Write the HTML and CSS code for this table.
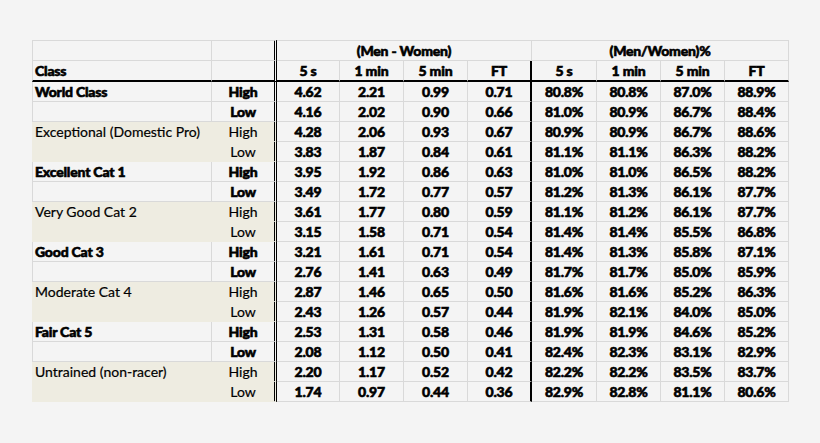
FILE: index.html
```html
<!DOCTYPE html>
<html>
<head>
<meta charset="utf-8">
<link rel="stylesheet" href="styles.css">
</head>
<body>
<table class="grid">
<colgroup>
<col class="c-class"><col class="c-hl"><col class="c-a"><col class="c-b"><col class="c-b"><col class="c-b"><col class="c-d"><col class="c-b"><col class="c-b"><col class="c-b">
</colgroup>
<thead>
<tr class="top">
<th class="cls"></th><th class="hl"></th><th colspan="4" class="grp1">(Men - Women)</th><th colspan="4">(Men/Women)%</th>
</tr>
<tr class="sub">
<th class="cls">Class</th><th class="hl"></th><th>5 s</th><th>1 min</th><th>5 min</th><th class="sep">FT</th><th>5 s</th><th>1 min</th><th>5 min</th><th>FT</th>
</tr>
</thead>
<tbody>
<tr><td class="cls">World Class</td><td class="hl">High</td><td>4.62</td><td>2.21</td><td>0.99</td><td class="sep">0.71</td><td>80.8%</td><td>80.8%</td><td>87.0%</td><td>88.9%</td></tr>
<tr><td class="cls"></td><td class="hl">Low</td><td>4.16</td><td>2.02</td><td>0.90</td><td class="sep">0.66</td><td>81.0%</td><td>80.9%</td><td>86.7%</td><td>88.4%</td></tr>
<tr class="shade first"><td class="cls">Exceptional (Domestic Pro)</td><td class="hl">High</td><td>4.28</td><td>2.06</td><td>0.93</td><td class="sep">0.67</td><td>80.9%</td><td>80.9%</td><td>86.7%</td><td>88.6%</td></tr>
<tr class="shade"><td class="cls"></td><td class="hl">Low</td><td>3.83</td><td>1.87</td><td>0.84</td><td class="sep">0.61</td><td>81.1%</td><td>81.1%</td><td>86.3%</td><td>88.2%</td></tr>
<tr><td class="cls">Excellent Cat 1</td><td class="hl">High</td><td>3.95</td><td>1.92</td><td>0.86</td><td class="sep">0.63</td><td>81.0%</td><td>81.0%</td><td>86.5%</td><td>88.2%</td></tr>
<tr><td class="cls"></td><td class="hl">Low</td><td>3.49</td><td>1.72</td><td>0.77</td><td class="sep">0.57</td><td>81.2%</td><td>81.3%</td><td>86.1%</td><td>87.7%</td></tr>
<tr class="shade first"><td class="cls">Very Good Cat 2</td><td class="hl">High</td><td>3.61</td><td>1.77</td><td>0.80</td><td class="sep">0.59</td><td>81.1%</td><td>81.2%</td><td>86.1%</td><td>87.7%</td></tr>
<tr class="shade"><td class="cls"></td><td class="hl">Low</td><td>3.15</td><td>1.58</td><td>0.71</td><td class="sep">0.54</td><td>81.4%</td><td>81.4%</td><td>85.5%</td><td>86.8%</td></tr>
<tr><td class="cls">Good Cat 3</td><td class="hl">High</td><td>3.21</td><td>1.61</td><td>0.71</td><td class="sep">0.54</td><td>81.4%</td><td>81.3%</td><td>85.8%</td><td>87.1%</td></tr>
<tr><td class="cls"></td><td class="hl">Low</td><td>2.76</td><td>1.41</td><td>0.63</td><td class="sep">0.49</td><td>81.7%</td><td>81.7%</td><td>85.0%</td><td>85.9%</td></tr>
<tr class="shade first"><td class="cls">Moderate Cat 4</td><td class="hl">High</td><td>2.87</td><td>1.46</td><td>0.65</td><td class="sep">0.50</td><td>81.6%</td><td>81.6%</td><td>85.2%</td><td>86.3%</td></tr>
<tr class="shade"><td class="cls"></td><td class="hl">Low</td><td>2.43</td><td>1.26</td><td>0.57</td><td class="sep">0.44</td><td>81.9%</td><td>82.1%</td><td>84.0%</td><td>85.0%</td></tr>
<tr><td class="cls">Fair Cat 5</td><td class="hl">High</td><td>2.53</td><td>1.31</td><td>0.58</td><td class="sep">0.46</td><td>81.9%</td><td>81.9%</td><td>84.6%</td><td>85.2%</td></tr>
<tr><td class="cls"></td><td class="hl">Low</td><td>2.08</td><td>1.12</td><td>0.50</td><td class="sep">0.41</td><td>82.4%</td><td>82.3%</td><td>83.1%</td><td>82.9%</td></tr>
<tr class="shade first"><td class="cls">Untrained (non-racer)</td><td class="hl">High</td><td>2.20</td><td>1.17</td><td>0.52</td><td class="sep">0.42</td><td>82.2%</td><td>82.2%</td><td>83.5%</td><td>83.7%</td></tr>
<tr class="shade"><td class="cls"></td><td class="hl">Low</td><td>1.74</td><td>0.97</td><td>0.44</td><td class="sep">0.36</td><td>82.9%</td><td>82.8%</td><td>81.1%</td><td>80.6%</td></tr>
</tbody>
</table>
</body>
</html>
```
FILE: styles.css
```css
html, body {
  margin: 0;
  background: #f4f4f4;
}
body {
  padding: 40px 0 0 32px;
  font-family: Lato, "Open Sans", sans-serif;
  color: #000;
}
.grid {
  border-collapse: separate;
  border-spacing: 0;
  table-layout: fixed;
  width: 757px;
}
.c-class { width: 180px; }
.c-hl { width: 65px; }
.c-a { width: 63px; }
.c-b { width: 64px; }
.c-d { width: 65px; }
.grid th, .grid td {
  box-sizing: border-box;
  height: 20px;
  padding: 0 2px 1px;
  border-right: 1px solid #d9d9d9;
  border-bottom: 1px solid #d9d9d9;
  font-size: 14px;
  font-weight: 900;
  -webkit-text-stroke: 0.6px #000;
  letter-spacing: -0.2px;
  line-height: 17px;
  text-align: center;
  vertical-align: bottom;
  white-space: nowrap;
  overflow: hidden;
}
.grid .top th {
  border-top: 1px solid #d9d9d9;
  height: 21px;
}
.grid .sub th {
  border-bottom: 2px solid #000;
  height: 21px;
}
.grid .cls {
  text-align: left;
  border-left: 1px solid #d9d9d9;
}
.grid .hl {
  border-right: 3px double #000;
}
.grid .sep {
  border-right: 2px solid #000;
}
.shade .cls, .shade .hl {
  background: #eeece1;
  font-weight: 400;
  -webkit-text-stroke: 0.2px #000;
  letter-spacing: 0;
  font-size: 14px;
  border-bottom-color: #eeece1;
}
.shade .cls {
  border-left-color: #eeece1;
  border-right-color: #eeece1;
}
```
